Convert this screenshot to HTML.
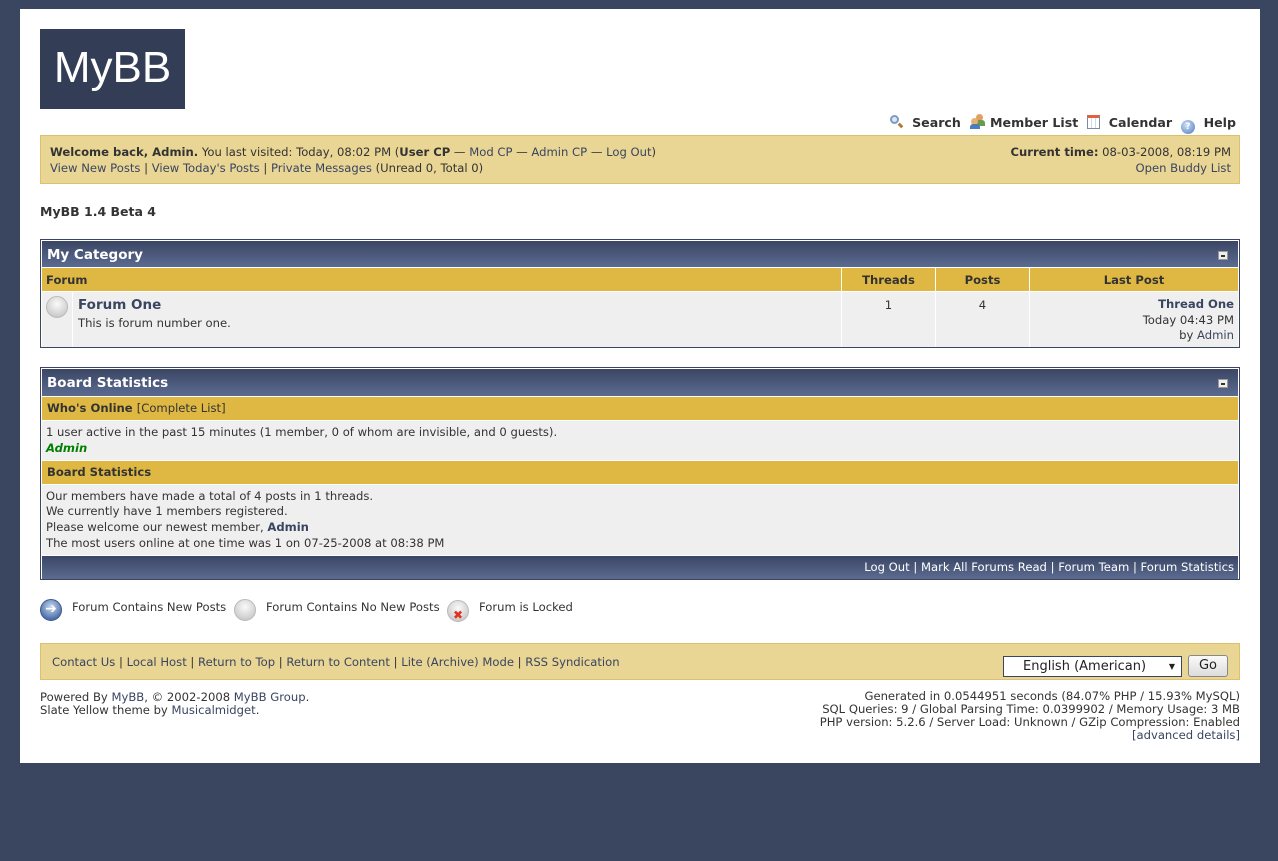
<!DOCTYPE html>
<html><head><meta charset="utf-8"><style>
*{margin:0;padding:0;box-sizing:border-box}
body{width:1278px;height:861px;background:#3a4560;font-family:"DejaVu Sans","Liberation Sans",sans-serif;font-size:11.6px;color:#333;position:relative;overflow:hidden}
.a{position:absolute;white-space:nowrap}
#wrap{position:absolute;left:20px;top:9px;width:1240px;height:754px;background:#fff}
a,.l{color:#3a4560;text-decoration:none}
.yb{position:absolute;background:#e9d594;border:1px solid #dcc06c}
.tb{position:absolute;border:1px solid #3a4560;background:#fff}
.th{position:absolute;left:1px;right:1px;background:linear-gradient(#3b4664,#5b6b91);color:#fff;font-weight:bold;font-size:13px}
.tc{position:absolute;background:#dfb843;font-weight:bold;color:#333}
.tr{position:absolute;background:#efefef}
.col{position:absolute;top:0;bottom:0;border-left:1px solid #fff}
.mn{position:absolute;width:10px;height:9px;background:#eee;border:1px solid #999}
.mn:after{content:"";position:absolute;left:2px;top:3px;width:4px;height:2px;background:#333}
.ic{position:absolute;border-radius:50%}
b{font-weight:bold}
</style></head><body>
<div id="wrap"></div>
<div class="a" style="left:40px;top:29px;width:145px;height:80px;background:#333d55;color:#fff;font-size:44px;font-family:'Liberation Sans',sans-serif;line-height:78px;text-align:center">MyBB</div>

<div class="a" style="right:42px;top:114px;font-size:12.6px;font-weight:bold;color:#333">
<span style="display:inline-block;width:14px;height:14px;vertical-align:-2px;position:relative"><span style="position:absolute;left:1px;top:0;width:9px;height:9px;border:2px solid #7a9cc6;border-radius:50%;background:#dfe8f5"></span><span style="position:absolute;left:9px;top:9px;width:5px;height:3px;background:#b07a3a;transform:rotate(45deg)"></span></span>&nbsp; Search &nbsp;<span style="display:inline-block;width:16px;height:15px;vertical-align:-2px;position:relative"><span style="position:absolute;left:6px;top:0;width:7px;height:7px;border-radius:50%;background:#e0a060"></span><span style="position:absolute;left:5px;top:6px;width:10px;height:6px;background:#6a9a4a;border-radius:3px 3px 0 0"></span><span style="position:absolute;left:1px;top:4px;width:7px;height:7px;border-radius:50%;background:#e8b070"></span><span style="position:absolute;left:0;top:10px;width:10px;height:5px;background:#4a7cc0;border-radius:3px 3px 0 0"></span></span> Member List &nbsp;<span style="display:inline-block;width:13px;height:14px;vertical-align:-2px;border:1px solid #7a8aa8;background:repeating-linear-gradient(90deg,#fff 0 3px,#cfd9e8 3px 4px);border-top:3px solid #e06040"></span>&nbsp; Calendar &nbsp;<span style="display:inline-block;width:14px;height:14px;vertical-align:-2px;border-radius:50%;background:radial-gradient(circle at 40% 35%,#cfe0f5,#4a78c0);color:#fff;font-size:9px;text-align:center;line-height:14px">?</span>&nbsp; Help</div>

<div class="yb" style="left:40px;top:135px;width:1200px;height:49px"></div>
<div class="a" style="left:50px;top:145px"><b>Welcome back, Admin.</b> You last visited: Today, 08:02 PM (<b>User CP</b> — <span class="l">Mod CP</span> — <span class="l">Admin CP</span> — <span class="l">Log Out</span>)</div>
<div class="a" style="left:50px;top:161px"><span class="l">View New Posts</span> | <span class="l">View Today's Posts</span> | <span class="l">Private Messages</span> (Unread 0, Total 0)</div>
<div class="a" style="right:47px;top:145px"><b>Current time:</b> 08-03-2008, 08:19 PM</div>
<div class="a" style="right:47px;top:161px"><span class="l">Open Buddy List</span></div>

<div class="a" style="left:40px;top:204px;font-weight:bold;font-size:12.5px">MyBB 1.4 Beta 4</div>

<div class="tb" style="left:40px;top:239px;width:1200px;height:109px">
 <div class="th" style="top:1px;height:26px;line-height:28px;padding-left:5px;font-size:13.5px">My Category</div>
 <div class="mn" style="right:11px;top:11px"></div>
 <div class="tc" style="left:1px;right:1px;top:28px;height:23px"></div>
 <div class="tr" style="left:1px;right:1px;top:52px;height:55px"></div>
 <div class="col" style="left:31px;top:52px"></div>
 <div class="col" style="left:800px;top:28px"></div>
 <div class="col" style="left:894px;top:28px"></div>
 <div class="col" style="left:988px;top:28px"></div>
</div>
<div class="a" style="left:46px;top:273px;font-weight:bold">Forum</div>
<div class="a" style="left:841px;top:273px;width:95px;text-align:center;font-weight:bold">Threads</div>
<div class="a" style="left:935px;top:273px;width:95px;text-align:center;font-weight:bold">Posts</div>
<div class="a" style="left:1029px;top:273px;width:210px;text-align:center;font-weight:bold">Last Post</div>
<div class="ic" style="left:46px;top:296px;width:22px;height:22px;background:radial-gradient(circle at 50% 35%,#fafafa,#cfcfcf 70%,#b0b0b0);border:1px solid #bbb"></div>
<div class="a" style="left:78px;top:297px;font-weight:bold;font-size:13.5px;color:#3a4560">Forum One</div>
<div class="a" style="left:78px;top:316px">This is forum number one.</div>
<div class="a" style="left:841px;top:298px;width:95px;text-align:center">1</div>
<div class="a" style="left:935px;top:298px;width:95px;text-align:center">4</div>
<div class="a" style="right:44px;top:297px;font-weight:bold;color:#3a4560">Thread One</div>
<div class="a" style="right:44px;top:313px">Today 04:43 PM</div>
<div class="a" style="right:44px;top:328px">by <span class="l">Admin</span></div>

<div class="tb" style="left:40px;top:367px;width:1200px;height:213px">
 <div class="th" style="top:1px;height:27px;line-height:29px;padding-left:5px;font-size:13.5px">Board Statistics</div>
 <div class="mn" style="right:11px;top:11px"></div>
 <div class="tc" style="left:1px;right:1px;top:29px;height:23px;line-height:23px;padding-left:5px">Who's Online <span style="font-weight:normal">[Complete List]</span></div>
 <div class="tr" style="left:1px;right:1px;top:53px;height:39px"></div>
 <div class="tc" style="left:1px;right:1px;top:93px;height:23px;line-height:23px;padding-left:5px">Board Statistics</div>
 <div class="tr" style="left:1px;right:1px;top:117px;height:70px"></div>
 <div class="th" style="top:188px;height:23px"></div>
</div>
<div class="a" style="left:46px;top:425px">1 user active in the past 15 minutes (1 member, 0 of whom are invisible, and 0 guests).</div>
<div class="a" style="left:46px;top:441px;color:#008000;font-weight:bold;font-style:italic">Admin</div>
<div class="a" style="left:46px;top:489px">Our members have made a total of 4 posts in 1 threads.</div>
<div class="a" style="left:46px;top:504px">We currently have 1 members registered.</div>
<div class="a" style="left:46px;top:520px">Please welcome our newest member, <b class="l">Admin</b></div>
<div class="a" style="left:46px;top:536px">The most users online at one time was 1 on 07-25-2008 at 08:38 PM</div>
<div class="a" style="right:44px;top:560px;color:#fff">Log Out | Mark All Forums Read | Forum Team | Forum Statistics</div>

<div class="ic" style="left:40px;top:599px;width:22px;height:22px;background:radial-gradient(circle at 50% 35%,#c8d8f0,#4a6ea8 75%);border:1px solid #3a5a90;color:#fff;font-size:14px;font-weight:bold;text-align:center;line-height:19px">➔</div>
<div class="a" style="left:72px;top:600px">Forum Contains New Posts</div>
<div class="ic" style="left:234px;top:599px;width:22px;height:22px;background:radial-gradient(circle at 50% 35%,#fafafa,#cfcfcf 70%,#b0b0b0);border:1px solid #bbb"></div>
<div class="a" style="left:266px;top:600px">Forum Contains No New Posts</div>
<div class="ic" style="left:447px;top:600px;width:22px;height:22px;background:radial-gradient(circle at 50% 35%,#fafafa,#cfcfcf 70%,#b0b0b0);border:1px solid #bbb;color:#e03020;font-weight:bold;font-size:12px;text-align:center;line-height:28px">✖</div>
<div class="a" style="left:479px;top:600px">Forum is Locked</div>

<div class="yb" style="left:40px;top:643px;width:1200px;height:37px"></div>
<div class="a" style="left:52px;top:655px"><span class="l">Contact Us</span> | <span class="l">Local Host</span> | <span class="l">Return to Top</span> | <span class="l">Return to Content</span> | <span class="l">Lite (Archive) Mode</span> | <span class="l">RSS Syndication</span></div>
<div class="a" style="left:1003px;top:656px;width:179px;height:21px;background:#fff;border:1px solid #3a4560;font-size:13px;line-height:19px;padding-left:19px;color:#222">English (American)<span style="position:absolute;right:6px;top:0;font-size:8px">▼</span></div>
<div class="a" style="left:1188px;top:655px;width:40px;height:22px;border:1px solid #888;border-radius:3px;background:linear-gradient(#fafafa,#dcdcdc);font-size:13px;text-align:center;line-height:20px;color:#222">Go</div>

<div class="a" style="left:40px;top:690px">Powered By <span class="l">MyBB</span>, © 2002-2008 <span class="l">MyBB Group</span>.</div>
<div class="a" style="left:40px;top:703px">Slate Yellow theme by <span class="l">Musicalmidget</span>.</div>
<div class="a" style="right:38px;top:690px;text-align:right;line-height:13px">Generated in 0.0544951 seconds (84.07% PHP / 15.93% MySQL)<br>SQL Queries: 9 / Global Parsing Time: 0.0399902 / Memory Usage: 3 MB<br>PHP version: 5.2.6 / Server Load: Unknown / GZip Compression: Enabled<br><span class="l">[advanced details]</span></div>
</body></html>
